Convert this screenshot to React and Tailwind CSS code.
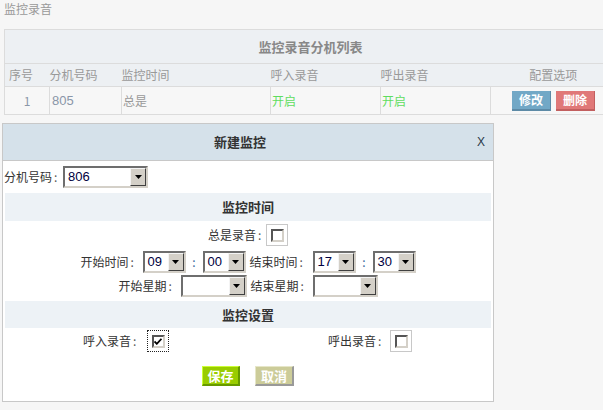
import React from "react";

const Select = ({ w, value }) => (
  <span
    className={`inline-flex h-[22px] ${w} shrink-0 box-border border-2 border-t-[#6e6e6e] border-l-[#6e6e6e] border-b-[#d4d0c8] border-r-[#d4d0c8] bg-white align-middle`}
  >
    <span className="flex-1 pl-[3px] leading-[18px] text-[13px] text-[#000040] font-['Liberation_Sans',sans-serif]">
      {value}
    </span>
    <span className="w-[16px] h-[18px] box-border bg-[#d4d0c8] border border-t-[#f4f4f4] border-l-[#f4f4f4] border-b-[#404040] border-r-[#404040] flex items-center justify-center">
      <svg width="7" height="4" viewBox="0 0 7 4">
        <polygon points="0,0 7,0 3.5,4" fill="#000" />
      </svg>
    </span>
  </span>
);

const Check = ({ checked }) => (
  <span
    className={`inline-flex w-[22px] h-[22px] shrink-0 box-border items-center justify-center align-middle border ${
      checked ? "border-dotted border-[#222]" : "border-solid border-[#c8c8c8]"
    }`}
  >
    <span className="w-[13px] h-[13px] box-border bg-white border-2 border-t-[#555] border-l-[#555] border-b-[#d4d0c8] border-r-[#d4d0c8] flex items-center justify-center">
      {checked && (
        <svg width="8" height="7" viewBox="0 0 8 7">
          <polyline points="0.5,3.5 2.8,5.8 7.5,0.8" fill="none" stroke="#000" strokeWidth="1.8" />
        </svg>
      )}
    </span>
  </span>
);

const Label = ({ text, colon }) => (
  <span className="flex shrink-0 items-center leading-[16px]">
    {text}
    <span className={`inline-block ${colon} pl-[2px] text-left text-[#555]`}>:</span>
  </span>
);

export default function App() {
  return (
    <div className="relative w-[603px] h-[410px] overflow-hidden bg-[#f6f6f6] font-['Noto_Sans_CJK_SC',sans-serif] text-[12px]">
      <div className="h-[29px] pl-[4px] pt-[1px] leading-[16px] text-[#999]">监控录音</div>

      <table className="ml-[4px] w-[612px] table-fixed border-collapse">
        <colgroup>
          <col className="w-[45px]" />
          <col className="w-[72px]" />
          <col className="w-[149px]" />
          <col className="w-[110px]" />
          <col className="w-[110px]" />
          <col className="w-[126px]" />
        </colgroup>
        <tbody>
          <tr className="h-[34px] bg-[#edf0f3]">
            <td colSpan={6} className="border border-[#dcdcdc] text-center font-bold text-[13px] text-[#888] leading-[16px] p-0">
              监控录音分机列表
            </td>
          </tr>
          <tr className="h-[23px] bg-[#edf0f3] text-[#999] leading-[16px]">
            <td className="border-y border-l border-[#dcdcdc] pl-[4px] p-0">序号</td>
            <td className="border-y border-[#dcdcdc] p-0 pl-0">分机号码</td>
            <td className="border-y border-[#dcdcdc] p-0">监控时间</td>
            <td className="border-y border-[#dcdcdc] p-0">呼入录音</td>
            <td className="border-y border-[#dcdcdc] p-0">呼出录音</td>
            <td className="border-y border-r border-[#dcdcdc] p-0 text-center">配置选项</td>
          </tr>
          <tr className="h-[28px] bg-[#f7f7f7] leading-[16px]">
            <td className="border border-[#dcdcdc] text-center text-[#8a96a8] p-0">1</td>
            <td className="border border-[#dcdcdc] pl-[2px] text-[#8a96a8] p-0 font-['Liberation_Sans',sans-serif] text-[13px]">805</td>
            <td className="border border-[#dcdcdc] pl-[1px] text-[#999] p-0">总是</td>
            <td className="border border-[#dcdcdc] pl-[1px] text-[#5fdd5f] p-0">开启</td>
            <td className="border border-[#dcdcdc] pl-[1px] text-[#5fdd5f] p-0">开启</td>
            <td className="border border-[#dcdcdc] p-0">
              <div className="flex justify-center gap-[5px]">
                <span className="w-[39px] h-[20px] box-border flex items-center justify-center bg-[#72a8c6] border-b-2 border-r border-[#5d8aa6] text-white font-bold leading-none">
                  修改
                </span>
                <span className="w-[39px] h-[20px] box-border flex items-center justify-center bg-[#e07878] border-b-2 border-r border-[#c25f5f] text-white font-bold leading-none">
                  删除
                </span>
              </div>
            </td>
          </tr>
        </tbody>
      </table>

      {/* Dialog */}
      <div className="absolute left-[2px] top-[123px] w-[492px] h-[279px] box-border border border-[#c8c8c8] bg-white flex flex-col text-[#333]">
        <div className="h-[37px] shrink-0 flex items-center bg-[#d5e1ea] border-b border-[#c8c8c8]">
          <div className="flex-1 text-center font-bold text-[13px] text-[#333] leading-[16px]">新建监控</div>
          <div className="w-[10px] mr-[6px] text-[12px] leading-none text-[#2a3a4a] font-['Liberation_Sans',sans-serif]">X</div>
        </div>

        <div className="flex items-center h-[32px] pl-[1px] pt-[5px] pb-[5px] box-border">
          <Label text="分机号码" colon="w-[11px]" />
          <Select w="w-[85px]" value="806" />
        </div>

        <div className="mx-[2px] h-[28px] shrink-0 bg-[#edf2f6] flex items-center justify-center font-bold text-[13px] leading-[16px]">
          监控时间
        </div>

        <div className="flex items-center justify-center pt-[3px] h-[25px] box-border">
          <Label text="总是录音" colon="w-[10px]" />
          <Check />
        </div>

        <div className="flex items-center justify-center mt-[5px] h-[22px]">
          <Label text="开始时间" colon="w-[14px]" />
          <Select w="w-[43px]" value="09" />
          <span className="w-[17px] text-center text-[#3a6a9a] leading-[16px]">:</span>
          <Select w="w-[43px]" value="00" />
          <span className="w-[4px]" />
          <Label text="结束时间" colon="w-[15px]" />
          <Select w="w-[43px]" value="17" />
          <span className="w-[17px] text-center text-[#3a6a9a] leading-[16px]">:</span>
          <Select w="w-[43px]" value="30" />
        </div>

        <div className="flex items-center justify-center mt-[2px] h-[22px]">
          <Label text="开始星期" colon="w-[14px]" />
          <Select w="w-[66px]" value="" />
          <span className="w-[4px]" />
          <Label text="结束星期" colon="w-[14px]" />
          <Select w="w-[65px]" value="" />
        </div>

        <div className="mx-[2px] mt-[4px] h-[27px] shrink-0 bg-[#edf2f6] flex items-center justify-center font-bold text-[13px] leading-[16px]">
          监控设置
        </div>

        <div className="grid grid-cols-[138px_183px_62px_1fr] items-center mt-[2px] h-[22px]">
          <span className="flex justify-end">
            <Label text="呼入录音" colon="w-[10px]" />
          </span>
          <span className="pl-[6px] flex">
            <Check checked />
          </span>
          <span className="flex justify-end">
            <Label text="呼出录音" colon="w-[10px]" />
          </span>
          <span className="pl-[4px] flex">
            <Check />
          </span>
        </div>

        <div className="flex justify-center gap-[15px] mt-[14px]">
          <span className="w-[38px] h-[20px] box-border flex items-center justify-center bg-[#99cc00] border border-t-[#ccff33] border-l-[#ccff33] border-b-2 border-r-2 border-b-[#669900] border-r-[#669900] text-white font-bold text-[13px] leading-none">
            保存
          </span>
          <span className="w-[39px] h-[20px] box-border flex items-center justify-center bg-[#cccc99] border border-t-[#e6e6c8] border-l-[#e6e6c8] border-b-2 border-r-2 border-b-[#999] border-r-[#999] text-white font-bold text-[13px] leading-none">
            取消
          </span>
        </div>
      </div>
    </div>
  );
}
